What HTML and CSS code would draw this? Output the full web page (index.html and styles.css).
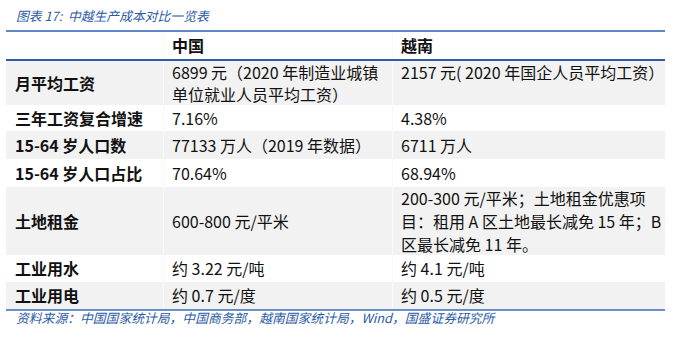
FILE: index.html
```html
<!DOCTYPE html>
<html lang="zh-CN">
<head>
<meta charset="utf-8">
<title>中越生产成本对比一览表</title>
<link rel="stylesheet" href="styles.css">
</head>
<body>
<div class="page">
  <div class="title">图表 17:&nbsp; 中越生产成本对比一览表</div>
  <div class="table">
    <div class="row head">
      <div class="cell"></div>
      <div class="cell b">中国</div>
      <div class="cell b">越南</div>
    </div>
    <div class="row grey r1">
      <div class="cell b">月平均工资</div>
      <div class="cell">6899 元（2020 年制造业城镇<br>单位就业人员平均工资）</div>
      <div class="cell top">2157 元(&nbsp;2020 年国企人员平均工资）</div>
    </div>
    <div class="row r2">
      <div class="cell b">三年工资复合增速</div>
      <div class="cell">7.16%</div>
      <div class="cell">4.38%</div>
    </div>
    <div class="row grey r3">
      <div class="cell b">15-64 岁人口数</div>
      <div class="cell">77133 万人（2019 年数据）</div>
      <div class="cell">6711 万人</div>
    </div>
    <div class="row r4">
      <div class="cell b">15-64 岁人口占比</div>
      <div class="cell">70.64%</div>
      <div class="cell">68.94%</div>
    </div>
    <div class="row grey r5">
      <div class="cell b">土地租金</div>
      <div class="cell">600-800 元/平米</div>
      <div class="cell">200-300 元/平米；土地租金优惠项<br>目：租用 A 区土地最长减免 15 年；B<br>区最长减免 11 年。</div>
    </div>
    <div class="row r6">
      <div class="cell b">工业用水</div>
      <div class="cell">约 3.22 元/吨</div>
      <div class="cell">约 4.1 元/吨</div>
    </div>
    <div class="row grey r7">
      <div class="cell b">工业用电</div>
      <div class="cell">约 0.7 元/度</div>
      <div class="cell">约 0.5 元/度</div>
    </div>
  </div>
  <div class="source">资料来源：中国国家统计局，中国商务部，越南国家统计局，Wind，国盛证券研究所</div>
</div>
</body>
</html>
```

FILE: styles.css
```css
html, body {
  margin: 0;
  padding: 0;
  background: #ffffff;
}

.page {
  padding: 8px 0 0 6px;
  font-family: "Noto Sans CJK SC", "DejaVu Sans", sans-serif;
  color: #111111;
}

.title {
  padding-left: 10px;
  font-size: 12.8px;
  line-height: 16px;
  font-style: italic;
  color: #2b5aa6;
  margin-bottom: 6px;
}

.table {
  width: 659px;
  border-top: 2px solid #5f87c6;
  border-bottom: 2px solid #6a8ec8;
  font-size: 16px;
}

.row {
  display: grid;
  grid-template-columns: 157px 229px 273px;
}

.row.head {
  height: 27px;
  border-bottom: 2px solid #2d5ba8;
}

.row.grey {
  background: #f2f2f2;
}

.cell {
  display: flex;
  align-items: center;
  padding-left: 9px;
  line-height: 23px;
  white-space: nowrap;
}

.cell + .cell {
  border-left: 1px solid #f8f8f8;
  padding-left: 8px;
}

.row.grey .cell + .cell {
  border-left-color: #fafafa;
}

.cell.top {
  align-items: flex-start;
}

.b {
  font-weight: 700;
}

.r1 { height: 44px; }
.r1 .cell { line-height: 22px; }
.r2 { height: 26px; }
.r3 { height: 28px; }
.r4 { height: 28px; }
.r5 { height: 68px; }
.r6 { height: 27px; }
.r7 { height: 27px; }

.source {
  padding-left: 10px;
  font-size: 12.8px;
  line-height: 14px;
  font-style: italic;
  color: #2b5aa6;
}
```
